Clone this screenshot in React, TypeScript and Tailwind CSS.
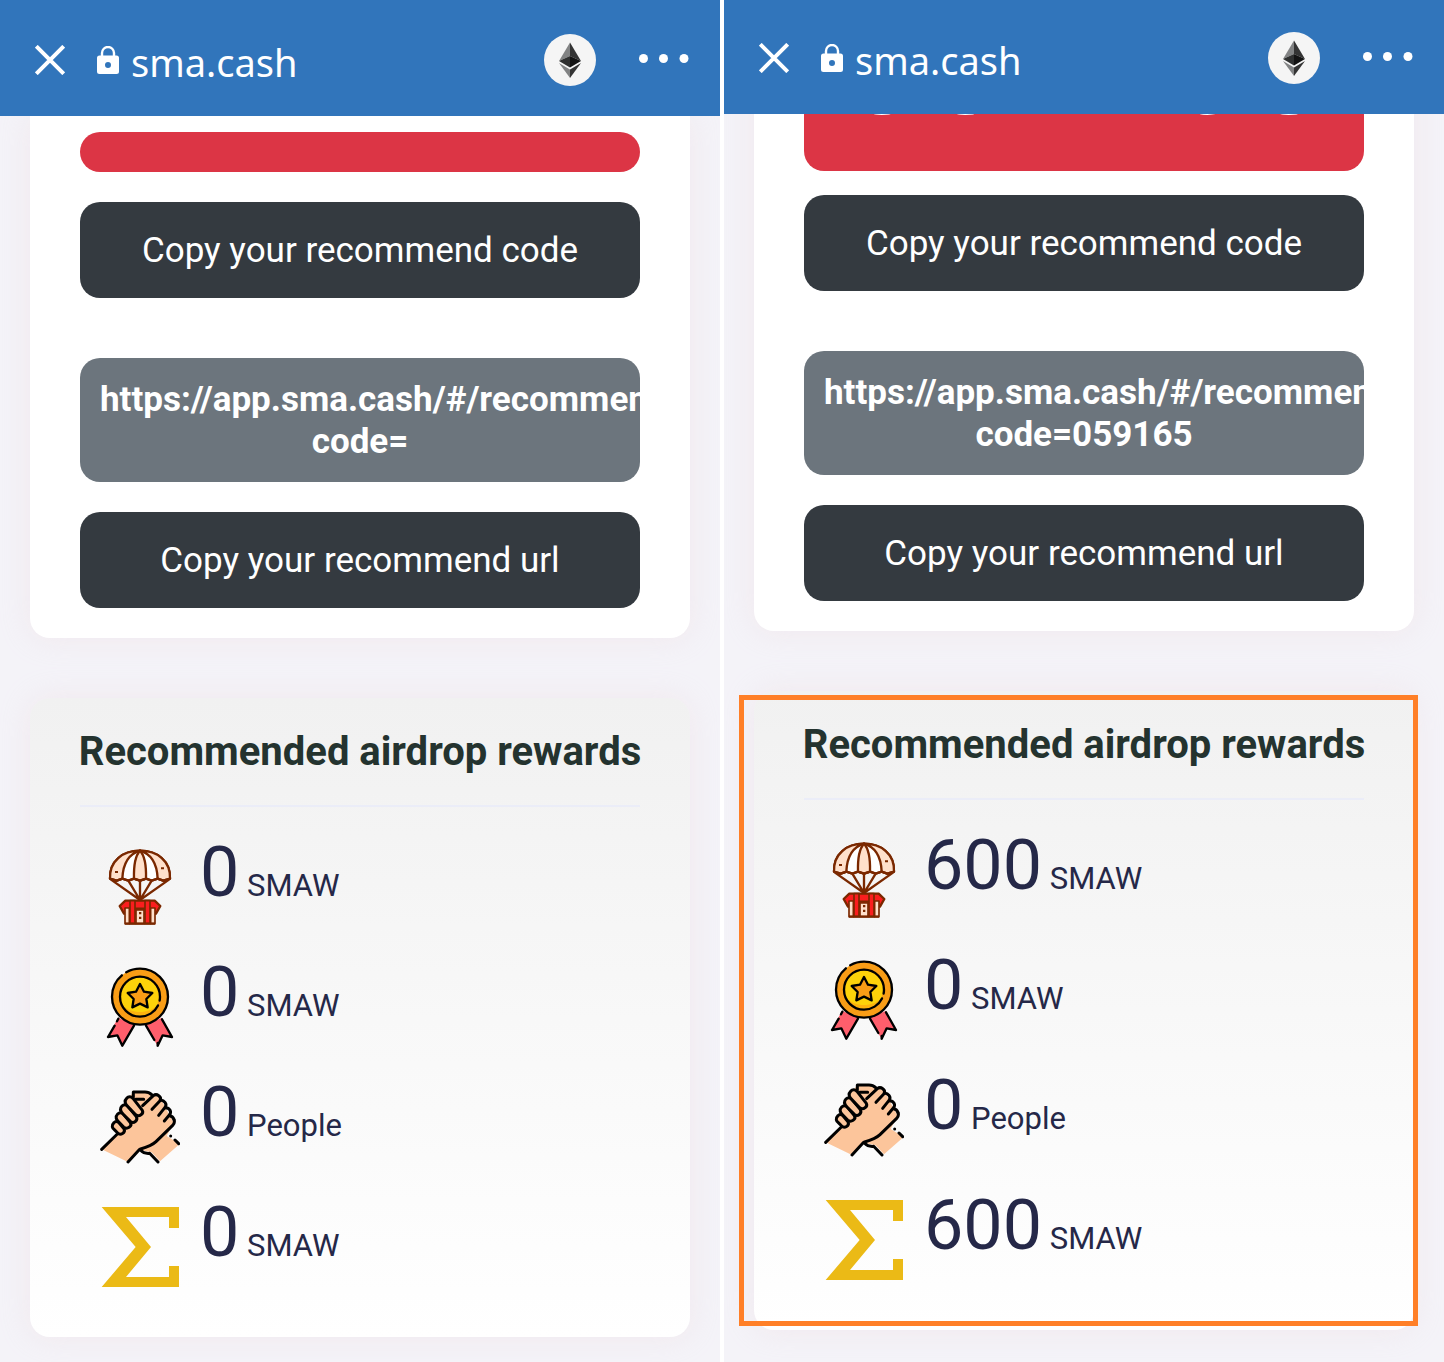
import type { ReactNode } from "react";

interface Reward {
  icon: ReactNode;
  label: string;
  value: number;
  unit: string;
}

interface ScreenProps {
  code: string;
  values: number[];
  highlighted?: boolean;
}

function CloseIcon() {
  return (
    <svg viewBox="0 0 30 30" className="size-[30px]" fill="none" stroke="white" strokeWidth="4">
      <path d="M1.3 1.3 28.7 28.7M28.7 1.3 1.3 28.7" />
    </svg>
  );
}

function LockIcon() {
  return (
    <svg viewBox="0 0 22 28" className="h-7 w-[22px]">
      <path d="M5 11V7a6 6 0 0 1 12 0v4" fill="none" stroke="white" strokeWidth="2.4" />
      <path
        fillRule="evenodd"
        fill="white"
        d="M2.5 9.5h17a2.5 2.5 0 0 1 2.5 2.5v13.500a2.500 2.500 0 0 1-2.500 2.500h-17A2.500 2.500 0 0 1 0 25.500V12a2.500 2.500 0 0 1 2.500-2.500ZM11 16a3 3 0 1 0 0 6 3 3 0 0 0 0-6Z"
      />
    </svg>
  );
}

function EthereumIcon() {
  return (
    <svg viewBox="0 0 52 52" className="size-[52px]">
      <circle cx="26" cy="26" r="26" fill="#f5f5f5" />
      <path d="M26 8.500 15 27l11-5Z" fill="#828384" />
      <path d="M26 8.500 37 27l-11-5Z" fill="#343434" />
      <path d="m15 27 11-5v11.500Z" fill="#2f3030" />
      <path d="m37 27-11-5v11.500Z" fill="#131313" />
      <path d="m15 29 11 6.500V44Z" fill="#828384" />
      <path d="m37 29-11 6.500V44Z" fill="#343434" />
    </svg>
  );
}

function DotsIcon() {
  return (
    <svg viewBox="0 0 50 12" className="h-3 w-[50px]" fill="white">
      <circle cx="4.500" cy="4.500" r="4.500" />
      <circle cx="24.500" cy="4.500" r="4.500" />
      <circle cx="45" cy="4.500" r="4.500" />
    </svg>
  );
}

function ParachuteIcon() {
  return (
    <svg viewBox="30 36 240 240" className="size-20 shrink-0" stroke="#7a2800" strokeWidth="7" strokeLinejoin="round">
      {/* Canopy */}
      <path d="M60 131C58 78 98 47 150 47s92 31 90 84l-20 6-17-6-18 6-17-6-18 6-18-6-17 6-18-6-17 6Z" fill="#fff" />
      <path d="M60 131C58 78 98 47 150 47c-34 10-51 38-53 84l-17 6Z" fill="#ffe0cb" />
      <path d="M240 131c2-53-38-84-90-84 34 10 51 38 53 84l17 6Z" fill="#ffe0cb" />
      <path d="M132 131c-1-35 5-70 18-84 13 14 19 49 18 84l-18 6Z" fill="#ffe0cb" />
      <path
        fill="none"
        d="M60 131l20 6 17-6 18 6 17-6 18 6 18-6 17 6 18-6 17 6 20-6M62 133l88 62 88-62M115 137l35 58 35-58M150 137v58"
      />
      <path d="M75 108h9v6h-9zM213 97h9v6h-9z" fill="#7a2800" stroke="none" />
      {/* Crate */}
      <path d="m106 197-17 16 13 23h96l13-23-17-16Z" fill="#fa1e1e" />
      <path d="M105 219h13v47h-13zM182 219h13v47h-13zM138 225h24v41h-24z" fill="#ffe0cb" strokeWidth="5" />
      <path d="M120 197h15v69h-15zM165 197h15v69h-15z" fill="#fa1e1e" strokeWidth="5" />
      <path d="M135 221h30M105 266h90" fill="none" />
      <path d="M147 231h7v7h-7zM147 245h7v7h-7z" fill="#7a2800" stroke="none" />
    </svg>
  );
}

function MedalIcon() {
  return (
    <svg viewBox="30 36 240 240" className="size-20 shrink-0" stroke="#000" strokeWidth="7" strokeLinejoin="round" strokeLinecap="round">
      {/* Ribbons */}
      <path d="m84 188-31 59 29-6 15 32 37-63Z" fill="#ff5e6c" stroke="none" />
      <path d="m216 188 31 59-29-6-15 32-37-63Z" fill="#ff5e6c" stroke="none" />
      <path d="m74 212-20 34 28-5 15 31 35-60M85 191l-4 8M168 212l25 43M203 272v-8M203 272l15-31 28 5-30-53" fill="none" />
      {/* Disc */}
      <circle cx="150" cy="125" r="84" fill="#f99d16" strokeDasharray="336 16 176" />
      <circle cx="150" cy="125" r="57" fill="#fdd20a" stroke="none" />
      <path d="M98 150c24 28 80 28 104 0-18 42-86 42-104 0Z" fill="#fdb20e" stroke="none" />
      <circle cx="150" cy="125" r="60" fill="none" strokeDasharray="12 15 350" />
      <path d="m150 87 12 23 25 4-18 18 4 25-23-11-23 11 4-25-18-18 25-4Z" fill="#f99d16" />
    </svg>
  );
}

function HandsIcon() {
  return (
    <svg viewBox="30 36 240 240" className="size-20 shrink-0" stroke="#000" strokeWidth="9" strokeLinejoin="round" strokeLinecap="round">
      <path
        d="M35 223 84 177 68 158l48-88 14-20h43l21 9 18 12 39 72-21 40 39 24-59 52-25-27-33-7-38 36Z"
        fill="#fcc59b"
        stroke="none"
      />
      <path
        d="M35 223 82 177M114 261l35-38c20-6 37-11 49-23l50-49c6-6 6-12 4-17M152 226c7 8 16 10 27 9l25 26M242 183v0M255 195l11 11"
        fill="none"
      />
      {/* Left fingers */}
      <g fill="#fcc59b">
        <path d="M72 143c-9 9-5 16 1 21l10 10c8 8 25 0 19-13l-15-18c-5-5-11-5-15 0Z" />
        <path d="M83 117c-9 9-3 18 2 23l16 16c10 9 27-2 20-13l-21-26c-5-5-12-5-17 0Z" />
        <path d="M96 93c-9 9-3 18 3 24l22 22c10 9 24-3 18-14l-26-32c-5-5-12-5-17 0Z" />
        <path d="M110 70c-8 8-4 17 3 24l24 25c11 8 25-3 20-13l-28-36c-6-6-14-6-19 0Z" />
      </g>
      <path d="M137 73h24M130 66V51h35q12 0 20 8" fill="none" />
      {/* Right fingers */}
      <path
        d="m158 92 32-30c10-8 27 3 20 15l-24 26M210 76c12-3 23 12 15 21l-19 24M226 98c14 0 20 13 12 22l-15 18M239 122c7 1 11 5 13 12"
        fill="none"
      />
    </svg>
  );
}

function SigmaIcon() {
  return (
    <svg viewBox="30 36 240 240" className="size-20 shrink-0" fill="#ebba16">
      <path d="M35 36h232v63h-30V66H108l75 90-75 90h129v-33h30v63H35l102-120Z" />
    </svg>
  );
}

function CopyButton({ children }: { children: ReactNode }) {
  return (
    <button
      type="button"
      className="block h-24 w-full rounded-[20px] bg-[#343a40] pt-0.5 text-[35px] text-white"
    >
      {children}
    </button>
  );
}

function RewardRow({ icon, label, value, unit }: Reward) {
  return (
    <li className="flex items-start gap-5 p-5" aria-label={label}>
      {icon}
      <p className="text-[70px] leading-[50px]">
        {value}
        <span className="text-[31px]"> {unit}</span>
      </p>
    </li>
  );
}

function Screen({ code, values, highlighted }: ScreenProps) {
  const rewards: Reward[] = [
    { icon: <ParachuteIcon />, label: "Airdrop", value: values[0], unit: "SMAW" },
    { icon: <MedalIcon />, label: "Bonus", value: values[1], unit: "SMAW" },
    { icon: <HandsIcon />, label: "Invited", value: values[2], unit: "People" },
    { icon: <SigmaIcon />, label: "Total", value: values[3], unit: "SMAW" },
  ];

  return (
    <section className="min-w-0 flex-1 overflow-hidden bg-[#f4f3f8]">
      <header
        className={`relative z-10 flex items-center bg-[#3175bb] pr-[31px] pl-[35px] text-white ${
          code ? "h-[114px] pt-0.5" : "h-[116px] pt-1"
        }`}
      >
        <button type="button" aria-label="Close">
          <CloseIcon />
        </button>
        <div className="ml-8 flex items-center gap-3">
          <LockIcon />
          <span className="pt-1 font-['Noto_Sans'] text-[38px] leading-10">sma.cash</span>
        </div>
        <button type="button" aria-label="Network" className="ml-auto">
          <EthereumIcon />
        </button>
        <button type="button" aria-label="More" className="ml-[43px]">
          <DotsIcon />
        </button>
      </header>

      <div className="px-[30px]">
        <div className="rounded-b-[20px] bg-white px-[50px] pb-[30px] shadow-[0_0_30px_rgba(235,210,215,0.3)]">
          {code ? (
            // Scrolled up so that only the foot of the code shows
            <div className="-mt-[113px] mb-6 rounded-[20px] bg-[#dc3545] pb-[42px] text-center text-[144px] leading-[128px] text-white">
              {code}
            </div>
          ) : (
            <div className="pt-4 pb-[30px]">
              <div className="h-10 rounded-[20px] bg-[#dc3545]" />
            </div>
          )}
          <CopyButton>Copy your recommend code</CopyButton>
          <div className="mt-[60px] mb-[30px] overflow-hidden rounded-[20px] bg-[#6c757d] px-5 pt-[21px] pb-[19px] text-center text-[35px] leading-[42px] font-bold text-white">
            https://app.sma.cash/#/recommend?
            <br />
            code={code}
          </div>
          <CopyButton>Copy your recommend url</CopyButton>
        </div>

        <div className="relative mt-[60px] rounded-[20px] bg-linear-to-b from-[#f1f1f1] to-white px-[50px] py-[30px] shadow-[0_0_30px_rgba(235,210,215,0.3)]">
          <h2 className="-mx-5 text-center text-[40px] leading-[48px] font-bold whitespace-nowrap text-[#24332f]">
            Recommended airdrop rewards
          </h2>
          <hr className="mt-[29px] border-t-2 border-[#ebedf8]" />
          <ul className="pt-5 text-[#252848]">
            {rewards.map((reward) => (
              <RewardRow key={reward.label} {...reward} />
            ))}
          </ul>
          {highlighted && (
            <div className="pointer-events-none absolute top-1 right-[-4px] bottom-1 left-[-15px] border-5 border-[#ff7f27]" />
          )}
        </div>
      </div>
    </section>
  );
}

export default function App() {
  return (
    <main className="flex min-h-screen gap-1 bg-white font-[Roboto,sans-serif]">
      <Screen code="" values={[0, 0, 0, 0]} />
      <Screen code="059165" values={[600, 0, 0, 600]} highlighted />
    </main>
  );
}
